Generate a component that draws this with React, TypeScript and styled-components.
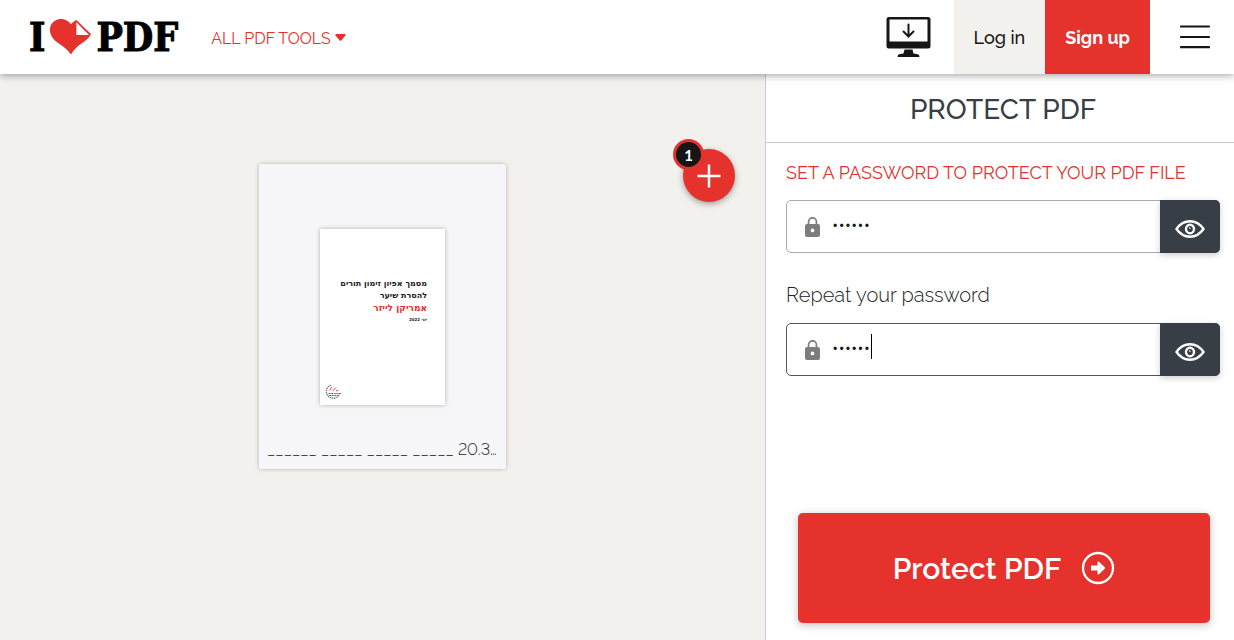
import React, { useState } from "react";
import styled, { createGlobalStyle } from "styled-components";

const red = "#e5322d";
const ink = "#161616";
const slate = "#383e45";

const GlobalStyle = createGlobalStyle`
  *, *::before, *::after { box-sizing: border-box; }
  body {
    margin: 0;
    background: #f2f1ed;
    color: ${ink};
    font-family: Raleway, Lato, "Open Sans", sans-serif;
    font-variant-numeric: lining-nums;
  }
  button, input { font: inherit; color: inherit; }
`;

const Page = styled.div`
  display: flex;
  flex-direction: column;
  min-height: 100vh;
`;

const Header = styled.header`
  position: relative;
  z-index: 1;
  display: flex;
  align-items: center;
  height: 74px;
  padding-left: 29px;
  background: #fff;
  box-shadow: 0 1px 8px rgba(0, 0, 0, 0.4);
`;

const Logo = styled.a`
  display: flex;
  align-items: center;
  gap: 4px;
  color: #000;
  font: bold 39px/40px "DejaVu Serif Condensed", "DejaVu Serif", serif;
  -webkit-text-stroke: 1px #000;
  text-decoration: none;
`;

const ToolsLink = styled.a`
  display: flex;
  align-items: center;
  gap: 4px;
  margin-left: 33px;
  padding-top: 4px;
  color: ${red};
  font-size: 16px;
  font-weight: 400;
  line-height: 20px;
  text-decoration: none;
`;

const Actions = styled.nav`
  display: flex;
  align-items: stretch;
  align-self: stretch;
  margin-left: auto;
`;

const IconLink = styled.a`
  display: flex;
  align-items: center;
  padding: 0 23px;
`;

const AuthLink = styled.a<{ $primary?: boolean }>`
  display: flex;
  align-items: center;
  padding: 0 20px;
  background: ${(p) => (p.$primary ? red : "#f2f1ed")};
  color: ${(p) => (p.$primary ? "#fff" : ink)};
  font-size: 18px;
  font-weight: ${(p) => (p.$primary ? 700 : 500)};
  text-decoration: none;
`;

const MenuButton = styled.button`
  display: flex;
  align-items: center;
  padding: 0 24px 0 30px;
  border: 0;
  background: none;
`;

const Workspace = styled.div`
  display: flex;
  flex: 1;
`;

const FileArea = styled.main`
  position: relative;
  display: flex;
  flex: 1;
  align-items: flex-start;
  justify-content: center;
  padding: 90px 20px;
`;

const FileCard = styled.figure`
  display: flex;
  flex-direction: column;
  align-items: center;
  width: 247px;
  margin: 0;
  padding: 65px 8px 8px;
  border-radius: 2px;
  background: #f6f6f8;
  box-shadow: 0 0 4px rgba(0, 0, 0, 0.25);
`;

const Sheet = styled.div`
  display: flex;
  flex-direction: column;
  justify-content: space-between;
  width: 125px;
  height: 176px;
  padding: 49px 18px 5px 4px;
  background: #fff;
  box-shadow: 0 0 4px rgba(0, 0, 0, 0.3);
`;

const SheetText = styled.div`
  font-family: "DejaVu Sans", sans-serif;
  font-weight: bold;
  line-height: 12px;
  white-space: nowrap;
`;

const SheetLine = styled.p<{ $accent?: boolean; $small?: boolean }>`
  margin: 0;
  color: ${(p) => (p.$accent ? red : "#222")};
  font-size: ${(p) => (p.$accent ? 9 : p.$small ? 4 : 8)}px;
`;

const FileName = styled.figcaption`
  width: 100%;
  margin-top: 34px;
  overflow: hidden;
  color: #222;
  font-size: 16px;
  font-weight: 300;
  line-height: 22px;
  text-overflow: ellipsis;
  white-space: nowrap;
`;

const AddButton = styled.button`
  position: absolute;
  top: 75px;
  right: 30px;
  display: flex;
  align-items: center;
  justify-content: center;
  width: 52px;
  height: 53px;
  padding: 0;
  border: 0;
  border-radius: 50%;
  background: ${red};
  box-shadow: 0 2px 6px rgba(0, 0, 0, 0.35);
`;

const Badge = styled.span`
  position: absolute;
  top: -10px;
  left: -10px;
  width: 31px;
  height: 31px;
  border: 3px solid ${red};
  border-radius: 50%;
  background: ${ink};
  color: #fff;
  font-family: Lato, sans-serif;
  font-size: 15px;
  font-weight: 700;
  line-height: 26px;
  text-align: center;
`;

const Sidebar = styled.aside`
  display: flex;
  flex-direction: column;
  width: 38%;
  border-left: 1px solid #ccc;
  background: #fff;
`;

const Title = styled.h1`
  margin: 0;
  padding: 19px 0 15px 6px;
  border-bottom: 1px solid #ccc;
  color: ${slate};
  font-size: 28px;
  font-weight: 500;
  line-height: 34px;
  text-align: center;
`;

const Form = styled.form`
  display: flex;
  flex: 1;
  flex-direction: column;
  padding: 17px 14px 17px 20px;
`;

const Label = styled.label<{ $accent?: boolean }>`
  margin-bottom: 15px;
  color: ${(p) => (p.$accent ? red : "#222")};
  font-size: ${(p) => (p.$accent ? 18 : 20)}px;
  font-weight: ${(p) => (p.$accent ? 400 : 300)};
  line-height: 25px;
`;

const Field = styled.div<{ $active?: boolean }>`
  position: relative;
  display: flex;
  height: 53px;
  margin-bottom: 30px;
  border: 1px solid ${(p) => (p.$active ? "#555" : "#aaa")};
  border-radius: 5px;
`;

const LockSlot = styled.span`
  display: flex;
  align-items: center;
  padding: 0 12px 0 18px;
`;

const PasswordInput = styled.input`
  flex: 1;
  min-width: 0;
  padding: 0 0 2px;
  border: 0;
  outline: 0;
  background: none;
  font-size: 18px;
  caret-color: transparent;
`;

const Caret = styled.span`
  position: absolute;
  top: 10px;
  left: 84px;
  width: 1px;
  height: 25px;
  background: #000;
`;

const RevealButton = styled.button`
  display: flex;
  align-items: center;
  justify-content: center;
  width: 60px;
  margin: -1px;
  padding: 4px 0 0;
  border: 0;
  border-radius: 0 5px 5px 0;
  background: ${slate};
  box-shadow: 0 2px 6px rgba(0, 0, 0, 0.2);
`;

const SubmitButton = styled.button`
  display: flex;
  align-items: center;
  justify-content: center;
  gap: 20px;
  height: 110px;
  margin: auto 10px 0 12px;
  border: 0;
  border-radius: 5px;
  background: ${red};
  box-shadow: 0 2px 8px rgba(0, 0, 0, 0.25);
  color: #fff;
  font-size: 30px;
  font-weight: 600;
`;

const HeartIcon = () => (
  <svg width="43" height="38" viewBox="0 0 44 38" aria-hidden="true">
    <path
      d="M22.500 37C18 30 12 27.500 6 22.500C-1 16-.5 6 6 2.300C12-1 19 1 22.500 6C24 4 25.500 2.700 28 1.500L43 16C41 20 38 22.500 33.500 25.500C29 28.500 25.500 32 22.500 37Z"
      fill={red}
    />
    <path d="M28 3.800V17H41Z" fill="#fff" />
  </svg>
);

const DesktopIcon = () => (
  <svg width="45" height="42" viewBox="0 0 45 42" fill={ink} aria-hidden="true">
    <path
      fillRule="evenodd"
      d="M3 1H42Q44.500 1 44.500 3.500V30Q44.500 32.500 42 32.500H3Q.5 32.500 .5 30V3.500Q.5 1 3 1ZM3.500 3.500V25.500H41.500V3.500Z"
    />
    <path d="M18.500 33.500H26.500L27.500 37.500L32 38.300Q33.500 38.700 33.500 41H11.500Q11.500 38.700 13 38.300L17.500 37.500Z" />
    <path
      d="M22.500 8.500V20M17.500 15.500L22.500 20.500L27.500 15.500"
      fill="none"
      stroke={ink}
      strokeWidth="2"
      strokeLinecap="round"
    />
  </svg>
);

const MenuIcon = () => (
  <svg width="30" height="24" viewBox="0 0 30 24" stroke={ink} strokeWidth="2.200" strokeLinecap="round" aria-hidden="true">
    <path d="M1 1.500H29M1 12H29M1 22.200H29" />
  </svg>
);

const LockIcon = () => (
  <svg width="15" height="20" viewBox="0 0 15 20" aria-hidden="true">
    <path
      fillRule="evenodd"
      fill="#7d7d7d"
      d="M2.700 7V4.800A4.800 4.800 0 0 1 12.300 4.800V7H13Q15 7 15 9V18Q15 20 13 20H2Q0 20 0 18V9Q0 7 2 7ZM4.400 7H10.600V4.800A3.100 3.100 0 0 0 4.400 4.800ZM7.500 11.500A1.900 1.900 0 1 0 7.500 15.300A1.900 1.900 0 1 0 7.500 11.500Z"
    />
  </svg>
);

const EyeIcon = () => (
  <svg width="30" height="18" viewBox="0 0 30 18" fill="none" stroke="#fff" strokeWidth="2.400" aria-hidden="true">
    <path d="M1.500 9C5 4 9.500 1.300 15 1.300S25 4 28.500 9C25 14 20.500 16.700 15 16.700S5 14 1.500 9Z" />
    <ellipse cx="15" cy="9" rx="4" ry="4.300" />
    <path d="M14.200 7.800Q15.200 7 15.200 9" strokeWidth="1" />
  </svg>
);

const ArrowIcon = () => (
  <svg width="34" height="34" viewBox="0 0 34 34" aria-hidden="true">
    <circle cx="17" cy="17" r="15" fill="none" stroke="#fff" strokeWidth="2.300" />
    <path
      d="M10.500 14.500H16.500V11.200Q17 10 18 10.800L24 16.400Q24.500 17 24 17.600L18 23.200Q17 24 16.500 22.800V19.500H10.500Q10 19.500 10 19V15Q10 14.500 10.500 14.500Z"
      fill="#fff"
    />
  </svg>
);

const StampIcon = () => (
  <svg width="18" height="16" viewBox="0 0 18 16" fill="none" aria-hidden="true">
    <path d="M7 1A6.800 6.800 0 1 0 15.500 10" stroke="#777" strokeWidth="1.300" strokeDasharray="1.500 .7" />
    <path d="M4.500 9.500H17M5 11.500H14" stroke="#555" strokeWidth=".9" strokeDasharray="2 .6" />
    <path d="M5.500 6.500L8 3M8.500 7L12 3.500M12 7L14.500 6" stroke={red} strokeWidth=".9" />
  </svg>
);

interface PasswordFieldProps {
  id: string;
  label: string;
  accent?: boolean;
  active?: boolean;
}

const PasswordField = ({ id, label, accent, active }: PasswordFieldProps) => {
  const [value, setValue] = useState("secret");
  const [visible, setVisible] = useState(false);
  return (
    <>
      <Label htmlFor={id} $accent={accent}>{label}</Label>
      <Field $active={active}>
        <LockSlot><LockIcon /></LockSlot>
        <PasswordInput
          id={id}
          type={visible ? "text" : "password"}
          value={value}
          onChange={(e) => setValue(e.target.value)}
        />
        {active && <Caret />}
        <RevealButton type="button" aria-label="Show password" onClick={() => setVisible(!visible)}>
          <EyeIcon />
        </RevealButton>
      </Field>
    </>
  );
};

export default function App() {
  return (
    <Page>
      <GlobalStyle />
      <Header>
        <Logo href="#">
          <span>I</span>
          <HeartIcon />
          <span>PDF</span>
        </Logo>
        <ToolsLink href="#tools">
          ALL PDF TOOLS
          <svg width="11" height="10" viewBox="0 0 11 10" aria-hidden="true">
            <path d="M1 0H10Q11 .5 10.500 1.500L6.300 6.500Q5.500 7.200 4.700 6.500L.5 1.500Q0 .5 1 0Z" fill={red} />
          </svg>
        </ToolsLink>
        <Actions>
          <IconLink href="#desktop" aria-label="Desktop app"><DesktopIcon /></IconLink>
          <AuthLink href="#login">Log in</AuthLink>
          <AuthLink href="#signup" $primary>Sign up</AuthLink>
          <MenuButton type="button" aria-label="Menu"><MenuIcon /></MenuButton>
        </Actions>
      </Header>
      <Workspace>
        <FileArea>
          <FileCard>
            <Sheet>
              <SheetText dir="rtl" lang="he">
                <SheetLine>מסמך אפיון זימון תורים</SheetLine>
                <SheetLine>להסרת שיער</SheetLine>
                <SheetLine $accent>אמריקן לייזר</SheetLine>
                <SheetLine $small>יוני 2022</SheetLine>
              </SheetText>
              <StampIcon />
            </Sheet>
            <FileName>______ _____ _____ _____ 20.3...</FileName>
          </FileCard>
          <AddButton type="button" aria-label="Add more files">
            <svg width="24" height="24" viewBox="0 0 24 24" stroke="#fff" strokeWidth="2.500" aria-hidden="true">
              <path d="M12 .5V23.500M.5 12H23.500" />
            </svg>
            <Badge>1</Badge>
          </AddButton>
        </FileArea>
        <Sidebar>
          <Title>PROTECT PDF</Title>
          <Form onSubmit={(e) => e.preventDefault()}>
            <PasswordField id="password" label="SET A PASSWORD TO PROTECT YOUR PDF FILE" accent />
            <PasswordField id="repeat" label="Repeat your password" active />
            <SubmitButton type="submit">
              Protect PDF
              <ArrowIcon />
            </SubmitButton>
          </Form>
        </Sidebar>
      </Workspace>
    </Page>
  );
}
